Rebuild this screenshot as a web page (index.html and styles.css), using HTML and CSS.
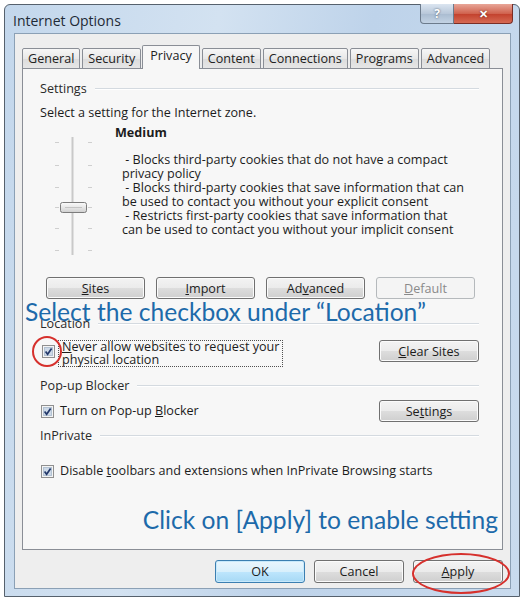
FILE: index.html
```html
<!DOCTYPE html>
<html lang="en">
<head>
    <meta charset="UTF-8">
    <title>Internet Options</title>
    <link rel="stylesheet" href="styles.css">
</head>
<body>

<div class="window">
    <div class="titlebar">
        <span class="title">Internet Options</span>
        <div class="captionButtons">
            <span class="helpButton">?</span>
            <span class="closeButton">✕</span>
        </div>
    </div>

    <div class="client">
        <div class="tabs">
            <span class="tab">General</span>
            <span class="tab">Security</span>
            <span class="tab selected">Privacy</span>
            <span class="tab">Content</span>
            <span class="tab">Connections</span>
            <span class="tab">Programs</span>
            <span class="tab">Advanced</span>
        </div>

        <div class="panel">
            <div class="groupTitle"><span>Settings</span></div>
            <div class="line zoneText">Select a setting for the Internet zone.</div>

            <div class="level">
                <svg class="slider" width="75" height="132" viewBox="0 0 75 132">
                    <line x1="32.5" y1="11" x2="32.5" y2="129" stroke="#c9c9c9" stroke-width="2"/>
                    <g stroke="#cfcfcf" stroke-width="1">
                        <line x1="15" y1="16.5" x2="19" y2="16.5"/><line x1="48" y1="16.5" x2="52" y2="16.5"/>
                        <line x1="15" y1="39.5" x2="19" y2="39.5"/><line x1="48" y1="39.5" x2="52" y2="39.5"/>
                        <line x1="15" y1="61.5" x2="19" y2="61.5"/><line x1="48" y1="61.5" x2="52" y2="61.5"/>
                        <line x1="15" y1="81.5" x2="19" y2="81.5"/><line x1="48" y1="81.5" x2="52" y2="81.5"/>
                        <line x1="15" y1="102.5" x2="19" y2="102.5"/><line x1="48" y1="102.5" x2="52" y2="102.5"/>
                        <line x1="15" y1="124.5" x2="19" y2="124.5"/><line x1="48" y1="124.5" x2="52" y2="124.5"/>
                    </g>
                    <defs>
                        <linearGradient id="thumbFill" x1="0" y1="0" x2="0" y2="1">
                            <stop offset="0" stop-color="#fbfbfb"/>
                            <stop offset="0.5" stop-color="#e6e6e6"/>
                            <stop offset="1" stop-color="#cfcfcf"/>
                        </linearGradient>
                    </defs>
                    <rect x="20.5" y="76.5" width="26" height="10" rx="2" fill="url(#thumbFill)" stroke="#7c7c7c"/>
                    <line x1="25" y1="81.5" x2="42" y2="81.5" stroke="#c4c4c4"/>
                </svg>
                <div class="levelText">
                    <div class="levelName">Medium</div>
                    <div class="levelDesc">
                        &nbsp;- Blocks third-party cookies that do not have a compact<br>
                        privacy policy<br>
                        &nbsp;- Blocks third-party cookies that save information that can<br>
                        be used to contact you without your explicit consent<br>
                        &nbsp;- Restricts first-party cookies that save information that<br>
                        can be used to contact you without your implicit consent
                    </div>
                </div>
            </div>

            <div class="levelButtons">
                <span class="button"><u>S</u>ites</span>
                <span class="button"><u>I</u>mport</span>
                <span class="button">Ad<u>v</u>anced</span>
                <span class="button disabled"><u>D</u>efault</span>
            </div>

            <div class="groupTitle locationTitle"><span>Location</span></div>
            <div class="optionRow locationRow">
                <div class="check">
                    <span class="box circled">
                        <svg width="13" height="13" viewBox="0 0 13 13"><rect x="0.5" y="0.5" width="12" height="12" fill="#f4f4f4" stroke="#8f8f8f"/><rect x="2.5" y="2.5" width="8" height="8" fill="#cdd9e7" stroke="#b3c2d2"/><path d="M3.6 6.6 L5.6 9.2 L9.6 3.6" fill="none" stroke="#23386a" stroke-width="1.7"/></svg>
                    </span>
                    <span class="focusLabel"><u>N</u>ever allow websites to request your<br>physical location</span>
                </div>
                <span class="button wide"><u>C</u>lear Sites</span>
            </div>

            <div class="groupTitle popupTitle"><span>Pop-up Blocker</span></div>
            <div class="optionRow popupRow">
                <div class="check">
                    <span class="box">
                        <svg width="13" height="13" viewBox="0 0 13 13"><rect x="0.5" y="0.5" width="12" height="12" fill="#f4f4f4" stroke="#8f8f8f"/><rect x="2.5" y="2.5" width="8" height="8" fill="#cdd9e7" stroke="#b3c2d2"/><path d="M3.6 6.6 L5.6 9.2 L9.6 3.6" fill="none" stroke="#23386a" stroke-width="1.7"/></svg>
                    </span>
                    <span>Turn on Pop-up <u>B</u>locker</span>
                </div>
                <span class="button wide">Se<u>t</u>tings</span>
            </div>

            <div class="groupTitle privateTitle"><span>InPrivate</span></div>
            <div class="optionRow privateRow">
                <div class="check">
                    <span class="box">
                        <svg width="13" height="13" viewBox="0 0 13 13"><rect x="0.5" y="0.5" width="12" height="12" fill="#f4f4f4" stroke="#8f8f8f"/><rect x="2.5" y="2.5" width="8" height="8" fill="#cdd9e7" stroke="#b3c2d2"/><path d="M3.6 6.6 L5.6 9.2 L9.6 3.6" fill="none" stroke="#23386a" stroke-width="1.7"/></svg>
                    </span>
                    <span>Disable <u>t</u>oolbars and extensions when InPrivate Browsing starts</span>
                </div>
            </div>

            <div class="hint hintApply">Click on [Apply] to enable setting</div>

            <div class="hint hintCheck">Select the checkbox under “Location”</div>
        </div>

        <div class="dialogButtons">
            <span class="button dialog default">OK</span>
            <span class="button dialog">Cancel</span>
            <span class="button dialog apply"><u>A</u>pply</span>
        </div>
    </div>
</div>

</body>
</html>
```

FILE: styles.css
```css
body {
    margin: 0;
    background-color: #ffffff;
    font-family: "Open Sans", "Noto Sans", sans-serif;
    font-size: 12.6px;
    color: #1c1c1c;
}
.window {
    box-sizing: border-box;
    width: 516px;
    margin: 4px 0 0 4px;
    padding: 0 8px 7px 9px;
    border: 1px solid #56616d;
    border-radius: 6px 6px 0 0;
    background: linear-gradient(100deg, #c3d7ec 0%, #d3e2f1 35%, #bed3ea 60%, #c9dbee 100%);
}
.titlebar {
    height: 28px;
    display: flex;
    justify-content: space-between;
    align-items: flex-start;
}
.title {
    margin: 6px 0 0 -1px;
    font-size: 14px;
    color: #1e2a36;
}
.captionButtons {
    display: flex;
    margin-right: -2px;
    margin-top: -1px;
}
.helpButton,
.closeButton {
    display: flex;
    justify-content: center;
    align-items: center;
    height: 19px;
    border: 1px solid #6c7b8c;
    border-top: none;
    color: #ffffff;
    font-weight: bold;
}
.helpButton {
    width: 32px;
    border-radius: 0 0 0 4px;
    background: linear-gradient(#dbe5f0, #b9c8da 50%, #a9bbd0 51%, #c3d3e4);
    font-size: 12px;
    text-shadow: 0 0 2px #3d4c5e;
}
.closeButton {
    width: 58px;
    border-left: none;
    border-color: #7a2e26;
    border-radius: 0 0 4px 0;
    background: linear-gradient(#e8a698, #d0634f 50%, #c2402c 51%, #d66a53);
    font-size: 11px;
    text-shadow: 0 0 2px #5c1a12;
}
.client {
    background-color: #eeeeee;
    border: 1px solid #8ba0b5;
    padding: 11px 7px 5px 7px;
}
.tabs {
    display: flex;
    align-items: flex-end;
    height: 24px;
    margin-bottom: -1px;
    position: relative;
    z-index: 1;
}
.tab {
    box-sizing: border-box;
    height: 21px;
    padding: 1px 5px 0 5px;
    margin-right: 2px;
    border: 1px solid #8a8e96;
    border-radius: 2px 2px 0 0;
    background: linear-gradient(#f6f6f6, #e8e8e8 50%, #dcdcdc 51%, #e6e6e6);
    color: #222;
}
.tab.selected {
    height: 24px;
    margin-left: -1px;
    padding: 1px 7px 0 7px;
    border-bottom: none;
    background: #f7f7f7;
}
.panel {
    box-sizing: border-box;
    position: relative;
    height: 482px;
    padding: 13px 23px 0 17px;
    background-color: #f7f7f7;
    border: 1px solid #8a8e96;
}
.groupTitle {
    display: flex;
    align-items: center;
    height: 14px;
    line-height: 14px;
    color: #2a2a2a;
}
.groupTitle::after {
    content: "";
    flex: 1;
    margin-left: 8px;
    border-top: 1px solid #d4dae0;
    border-bottom: 1px solid #ffffff;
}
.line {
    height: 14px;
    line-height: 14px;
}
.zoneText {
    margin-top: 10px;
}
.level {
    display: flex;
    margin-top: 6px;
}
.slider {
    flex: none;
}
.levelName {
    line-height: 14px;
    font-weight: bold;
}
.levelDesc {
    margin-top: 13px;
    padding-left: 7px;
    line-height: 14px;
}
.levelButtons {
    display: grid;
    grid-template-columns: repeat(4, 99px);
    gap: 11px;
    margin: 19px 0 0 6px;
}
.button {
    box-sizing: border-box;
    display: flex;
    justify-content: center;
    align-items: center;
    height: 22px;
    border: 1px solid #707070;
    border-radius: 3px;
    background: linear-gradient(#f3f3f3, #ebebeb 50%, #dddddd 51%, #cfcfcf);
    box-shadow: inset 0 0 0 1px #fbfbfb;
    color: #1c1c1c;
}
.button.disabled {
    border-color: #b5b9bc;
    background: #f4f4f4;
    box-shadow: none;
    color: #8a8a8a;
}
.button.wide {
    width: 100px;
}
.locationTitle {
    margin-top: 18px;
}
.optionRow {
    display: flex;
    justify-content: space-between;
}
.check {
    display: flex;
    align-items: center;
    gap: 6px;
    line-height: 14px;
}
.box {
    display: flex;
    position: relative;
    margin-left: 1px;
}
.locationRow {
    margin-top: 9px;
    align-items: flex-start;
}
.locationRow .check {
    align-items: flex-start;
    gap: 3px;
}
.locationRow .box {
    margin: 5px 0 0 2px;
}
.focusLabel {
    padding: 0 3px;
    border: 1px dotted #505050;
    line-height: 12.5px;
}
.circled::after {
    content: "";
    position: absolute;
    left: -10px;
    top: -9px;
    width: 26px;
    height: 27px;
    border: 2px solid #d6302c;
    border-radius: 50%;
}
.popupTitle {
    margin-top: 12px;
}
.popupRow {
    margin-top: 7px;
    align-items: center;
}
.privateTitle {
    margin-top: 7px;
}
.privateRow {
    margin-top: 21px;
}
.hint {
    font-family: "Lato", "Open Sans", sans-serif;
    font-size: 24.6px;
    line-height: 30px;
    color: #1d6aaa;
}
.hintApply {
    margin: 27px -19px 0 0;
    text-align: right;
}
.hintCheck {
    position: absolute;
    left: 2px;
    top: 228px;
}
.dialogButtons {
    display: flex;
    justify-content: flex-end;
    gap: 9px;
    margin-top: 10px;
}
.button.dialog {
    width: 90px;
    height: 23px;
}
.button.default {
    border-color: #3c7fb1;
    background: linear-gradient(#eaf6fd, #d9f0fc 50%, #bee6fd 51%, #a7d9f5);
    box-shadow: inset 0 0 0 1px #c8e9fb;
}
.apply {
    position: relative;
}
.apply::after {
    content: "";
    position: absolute;
    left: -2px;
    top: -8px;
    width: 94px;
    height: 37px;
    border: 2px solid #d6302c;
    border-radius: 50%;
}
```
